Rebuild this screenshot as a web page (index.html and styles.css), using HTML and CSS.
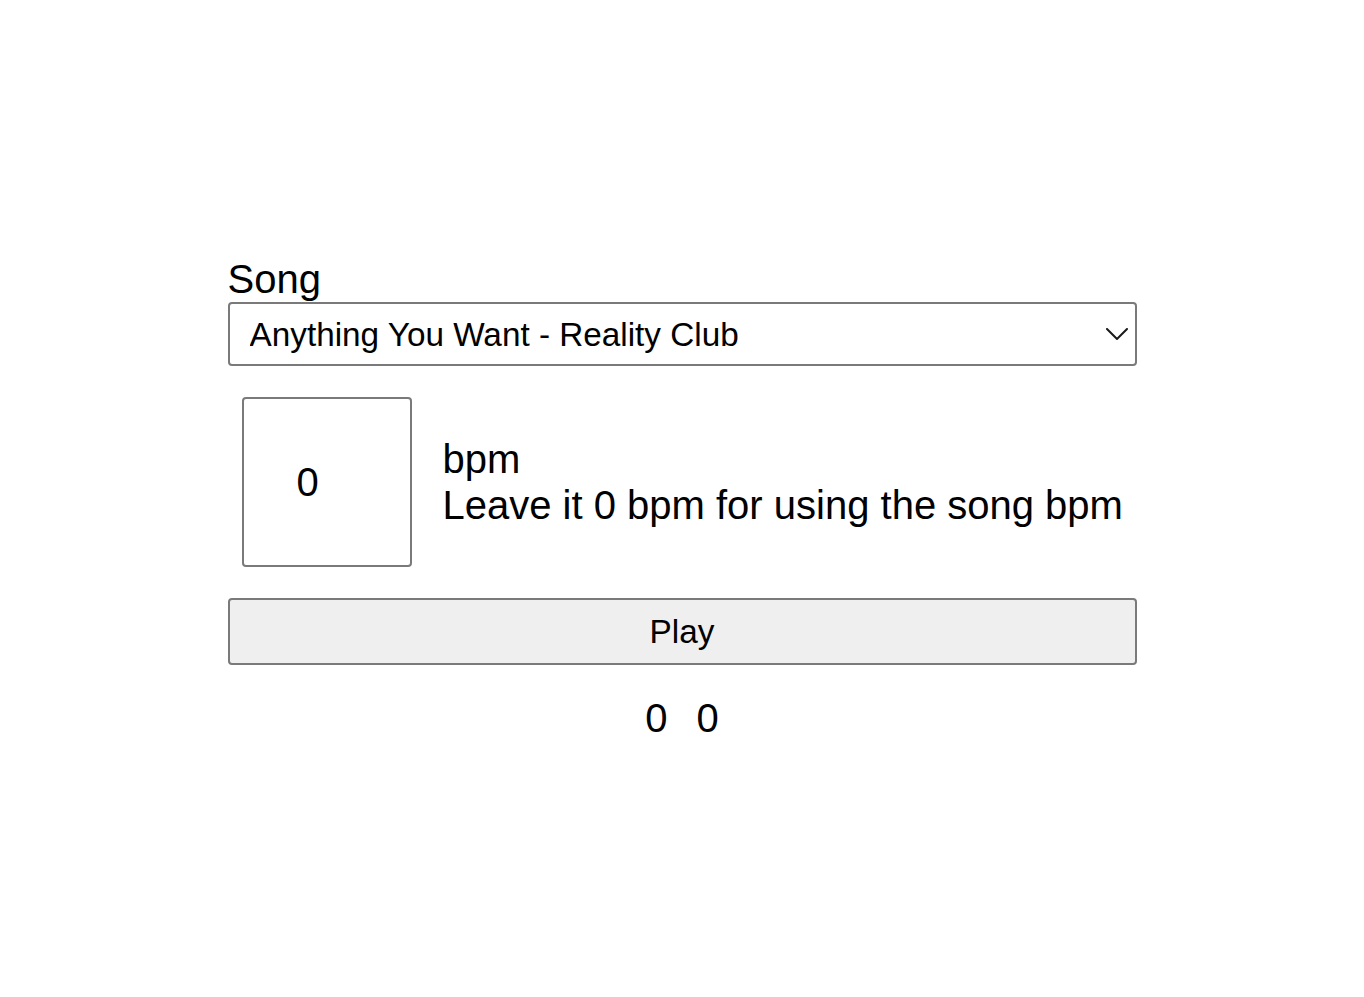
FILE: index.html
```html
<!DOCTYPE html>
<html lang="en">
<head>
<meta charset="utf-8">
<title>Metronome</title>
<link rel="stylesheet" href="styles.css">
</head>
<body>
<main class="app">
  <label class="song-label" for="song">Song</label>
  <div class="select-wrap">
    <select id="song" class="song-select">
      <option>Anything You Want - Reality Club</option>
    </select>
    <svg class="chevron" width="22" height="12" viewBox="0 0 22 12" aria-hidden="true">
      <path d="M1 1 L11 11 L21 1" fill="none" stroke="#1a1a1a" stroke-width="2" stroke-linecap="round" stroke-linejoin="miter"/>
    </svg>
  </div>
  <div class="bpm-row">
    <input class="bpm-input" type="number" value="0">
    <div class="bpm-text">
      <div>bpm</div>
      <div>Leave it 0 bpm for using the song bpm</div>
    </div>
  </div>
  <button class="play-btn" type="button">Play</button>
  <div class="counters">
    <span>0</span>
    <span>0</span>
  </div>
</main>
</body>
</html>
```

FILE: styles.css
```css
html, body {
  margin: 0;
  padding: 0;
}
body {
  height: 100vh;
  display: flex;
  align-items: center;
  justify-content: center;
  font-family: "Liberation Sans", Arial, sans-serif;
  font-size: 40px;
  color: #000;
  background: #fff;
}
.app {
  width: 909px;
  display: flex;
  flex-direction: column;
}
.song-label {
  display: block;
  line-height: 46px;
}
.select-wrap {
  position: relative;
  display: flex;
}
.song-select {
  -webkit-appearance: none;
  appearance: none;
  flex: 1;
  box-sizing: border-box;
  height: 64px;
  font-family: "Liberation Sans", Arial, sans-serif;
  font-size: 33.3px;
  padding: 0 40px 0 20px;
  color: #000;
  background: #fff;
  border: 2px solid #7a7a7a;
  border-radius: 4px;
}
.chevron {
  position: absolute;
  right: 9px;
  top: 26px;
  pointer-events: none;
}
.bpm-row {
  display: flex;
  align-items: center;
  gap: 31px;
  margin: 31px 0 31px 14px;
}
.bpm-input {
  box-sizing: border-box;
  width: 170px;
  height: 170px;
  font-family: "Liberation Sans", Arial, sans-serif;
  font-size: 40px;
  padding: 0 0 0 53px;
  color: #000;
  background: #fff;
  border: 2px solid #7a7a7a;
  border-radius: 4px;
  outline: none;
}
.bpm-input::-webkit-inner-spin-button,
.bpm-input::-webkit-outer-spin-button {
  -webkit-appearance: none;
  margin: 0;
}
.bpm-text {
  line-height: 46px;
}
.play-btn {
  box-sizing: border-box;
  height: 67px;
  font-family: "Liberation Sans", Arial, sans-serif;
  font-size: 33.3px;
  color: #000;
  background: #efefef;
  border: 2px solid #7a7a7a;
  border-radius: 4px;
}
.counters {
  display: flex;
  justify-content: center;
  gap: 29px;
  margin-top: 30px;
  line-height: 46px;
}
```
